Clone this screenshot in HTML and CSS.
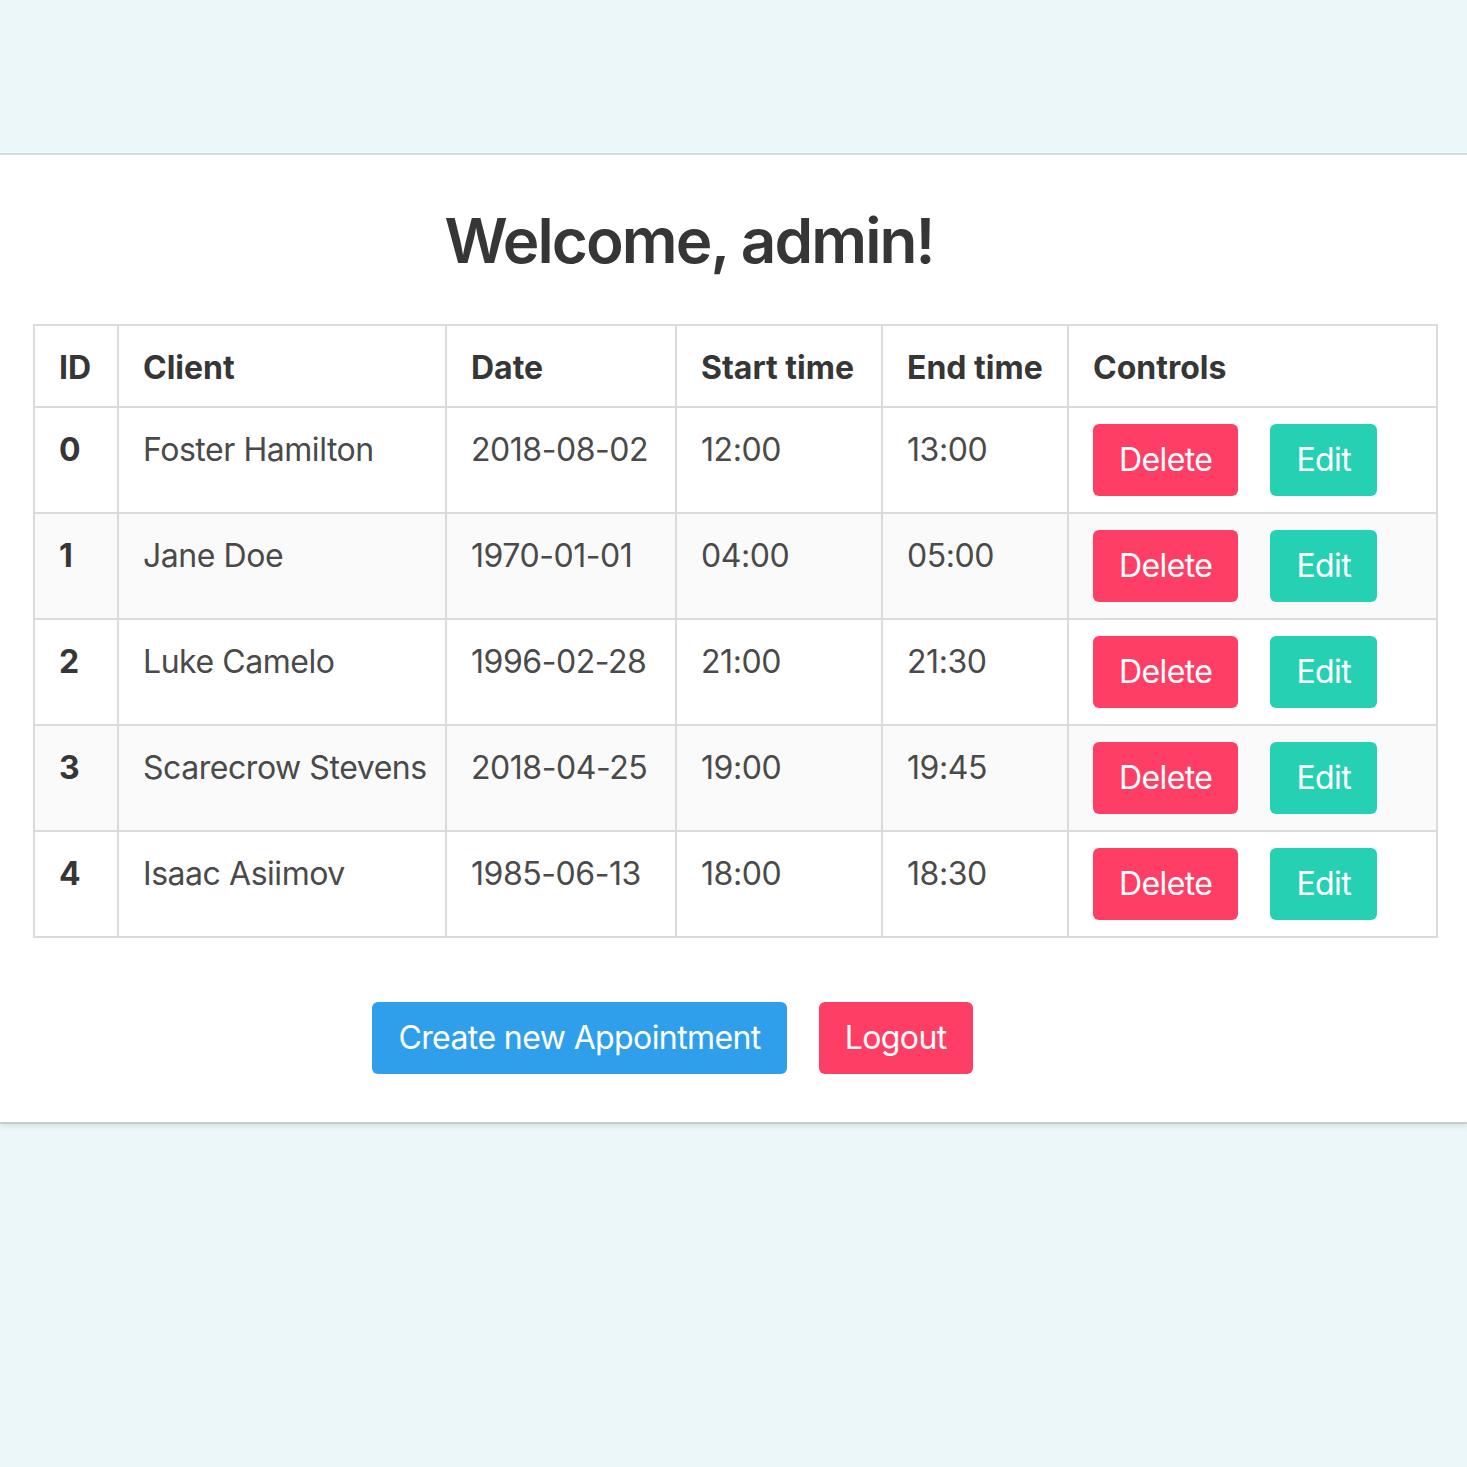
FILE: index.html
```html
<!DOCTYPE html>
<html lang="en">
<head>
<meta charset="utf-8">
<title>Appointments</title>
<link rel="stylesheet" href="styles.css">
</head>
<body>
<div class="page">
  <main class="box">
    <h1 class="title">Welcome, admin!</h1>
    <table class="table">
      <colgroup>
        <col class="c-id"><col class="c-client"><col class="c-date"><col class="c-start"><col class="c-end"><col class="c-ctrl">
      </colgroup>
      <thead>
        <tr><th>ID</th><th>Client</th><th>Date</th><th>Start time</th><th>End time</th><th>Controls</th></tr>
      </thead>
      <tbody>
        <tr><th>0</th><td>Foster Hamilton</td><td>2018-08-02</td><td>12:00</td><td>13:00</td><td><div class="buttons"><a class="button danger">Delete</a><a class="button primary">Edit</a></div></td></tr>
        <tr><th>1</th><td>Jane Doe</td><td>1970-01-01</td><td>04:00</td><td>05:00</td><td><div class="buttons"><a class="button danger">Delete</a><a class="button primary">Edit</a></div></td></tr>
        <tr><th>2</th><td>Luke Camelo</td><td>1996-02-28</td><td>21:00</td><td>21:30</td><td><div class="buttons"><a class="button danger">Delete</a><a class="button primary">Edit</a></div></td></tr>
        <tr><th>3</th><td>Scarecrow Stevens</td><td>2018-04-25</td><td>19:00</td><td>19:45</td><td><div class="buttons"><a class="button danger">Delete</a><a class="button primary">Edit</a></div></td></tr>
        <tr><th>4</th><td>Isaac Asiimov</td><td>1985-06-13</td><td>18:00</td><td>18:30</td><td><div class="buttons"><a class="button danger">Delete</a><a class="button primary">Edit</a></div></td></tr>
      </tbody>
    </table>
    <div class="actions">
      <a class="button info">Create new Appointment</a>
      <a class="button danger">Logout</a>
    </div>
  </main>
</div>
</body>
</html>
```
FILE: styles.css
```css
html, body {
  margin: 0;
  padding: 0;
}
body {
  background: #ecf7f9;
  font-family: Inter, "Noto Sans", "Liberation Sans", sans-serif;
  color: #4a4a4a;
  font-size: 32px;
  line-height: 1.5;
  min-height: 1467px;
}
.page {
  padding-top: 155px;
}
.box {
  background: #fff;
  box-shadow: 0 4px 6px rgba(10, 10, 10, 0.1), 0 0 0 2px rgba(10, 10, 10, 0.1);
  padding: 50px 30px 48px 33px;
}
.title {
  margin: 0 0 47px;
  padding-right: 92px;
  text-align: center;
  font-size: 62px;
  line-height: 72px;
  font-weight: 600;
  color: #363636;
  letter-spacing: -1.9px;
}
.table {
  width: 100%;
  border-collapse: collapse;
  table-layout: fixed;
  margin: 0 0 64px;
  color: #4a4a4a;
}
.c-id { width: 84px; }
.c-client { width: 328px; }
.c-date { width: 230px; }
.c-start { width: 206px; }
.c-end { width: 186px; }
.c-ctrl { width: 369px; }
.table th,
.table td {
  border: 2px solid #dbdbdb;
  padding: 16px 24px;
  vertical-align: top;
  text-align: left;
  white-space: nowrap;
}
.table thead th {
  padding: 18px 24px 14px;
}
.table tbody th,
.table tbody td {
  line-height: 52px;
}
.table td {
  letter-spacing: -0.45px;
}
.table th {
  color: #363636;
  font-weight: 700;
}
.table tbody tr:nth-child(even) {
  background: #fafafa;
}
.buttons {
  display: flex;
  gap: 32px;
}
.button {
  display: inline-flex;
  align-items: center;
  justify-content: center;
  box-sizing: border-box;
  height: 72px;
  padding: 0 24px;
  border: 2px solid transparent;
  border-radius: 6px;
  color: #fff;
  font-size: 32px;
  line-height: 1.5;
  letter-spacing: -0.6px;
  text-decoration: none;
  cursor: pointer;
}
.danger { background: #ff3e65; }
.primary { background: #26d1b3; }
.info { background: #2f9fec; }
.actions {
  display: flex;
  justify-content: center;
  gap: 32px;
  padding-right: 125px;
}
```
